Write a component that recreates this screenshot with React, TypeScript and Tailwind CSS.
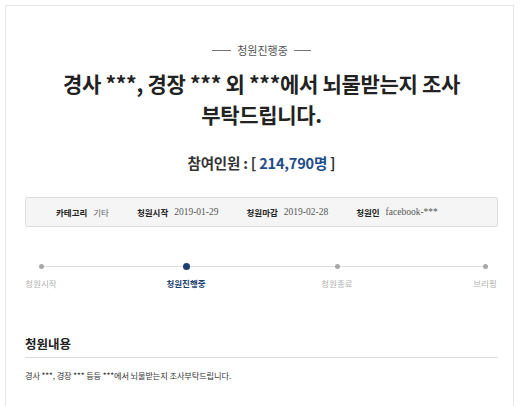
import React from "react";

const KR = "font-['Noto_Sans_CJK_KR','Noto_Sans',sans-serif]";

const infoItems = [
  { label: "카테고리", value: "기타", serif: false },
  { label: "청원시작", value: "2019-01-29", serif: true },
  { label: "청원마감", value: "2019-02-28", serif: true },
  { label: "청원인", value: "facebook-***", serif: true },
];

// widths/margins put each dot right over the centre of its label
const steps = [
  { label: "청원시작", active: false, box: "w-[32px]" },
  { label: "청원진행중", active: true, box: "w-[50px] ml-[104px]" },
  { label: "청원종료", active: false, box: "w-[50px] ml-[101px]" },
  { label: "브리핑", active: false, box: "w-[24px] ml-[111px]" },
];

export default function App() {
  return (
    <div className={`w-[520px] h-[406px] overflow-hidden bg-white ${KR}`}>
      <div className="ml-[5px] mt-[5px] w-[509px] h-[420px] border border-[#e6e6e6] pl-[19px] pr-[15px] pt-[36px]">
        {/* status */}
        <div className="flex items-center justify-center gap-[6px] text-[11px] leading-[16px] text-[#555]">
          <span className="w-[19px] h-px bg-[#777]" />
          <span>청원진행중</span>
          <span className="w-[17px] h-px bg-[#777]" />
        </div>

        {/* title */}
        <h1 className="mt-[10px] text-center text-[21px] leading-[31px] font-bold text-[#222] tracking-[-0.3px]">
          경사 ***, 경장 *** 외 ***에서 뇌물받는지 조사
          <br />
          부탁드립니다.
        </h1>

        {/* count */}
        <div className="mt-[23px] text-center text-[14.5px] leading-[20px] font-bold text-[#333] tracking-[-0.2px]">
          참여인원 : [ <span className="text-[#1e4c89]">214,790명</span> ]
        </div>

        {/* info */}
        <div className="mt-[24px] h-[30px] rounded-[2px] border border-[#dedede] bg-[#f5f5f5] flex items-center gap-[28px] pl-[30px]">
          {infoItems.map((it) => (
            <div key={it.label} className="flex items-center gap-[6px] leading-[12px]">
              <span className="text-[8.5px] font-bold text-[#222]">{it.label}</span>
              <span
                className={
                  it.serif
                    ? "text-[9.5px] text-[#555] font-['Liberation_Serif',serif]"
                    : "text-[8.5px] text-[#666]"
                }
              >
                {it.value}
              </span>
            </div>
          ))}
        </div>

        {/* progress */}
        <div className="relative mt-[35px] flex">
          <div className="absolute left-[16px] right-[12px] top-[4px] h-px bg-[#dcdcdc]" />
          {steps.map((s) => (
            <div key={s.label} className={`relative flex flex-col items-center shrink-0 ${s.box}`}>
              <div className="h-[8px] flex items-center justify-center">
                {s.active ? (
                  <span className="w-[7px] h-[7px] rounded-full bg-[#1d3f72]" />
                ) : (
                  <span className="w-[5px] h-[5px] rounded-full bg-[#a8a8a8]" />
                )}
              </div>
              <span
                className={
                  s.active
                    ? "mt-[7px] whitespace-nowrap text-[8.5px] leading-[12px] font-bold text-[#1d3f72]"
                    : "mt-[7px] whitespace-nowrap text-[8.5px] leading-[12px] text-[#b0b0b0]"
                }
              >
                {s.label}
              </span>
            </div>
          ))}
        </div>

        {/* content */}
        <h2 className="mt-[46px] pb-[4px] border-b border-[#dddddd] text-[12.5px] leading-[18px] font-bold text-[#222]">
          청원내용
        </h2>
        <p className="mt-[10px] text-[8.2px] leading-[14px] text-[#333] tracking-[-0.1px]">
          경사 ***, 경장 *** 등등 ***에서 뇌물받는지 조사부탁드립니다.
        </p>
      </div>
    </div>
  );
}
